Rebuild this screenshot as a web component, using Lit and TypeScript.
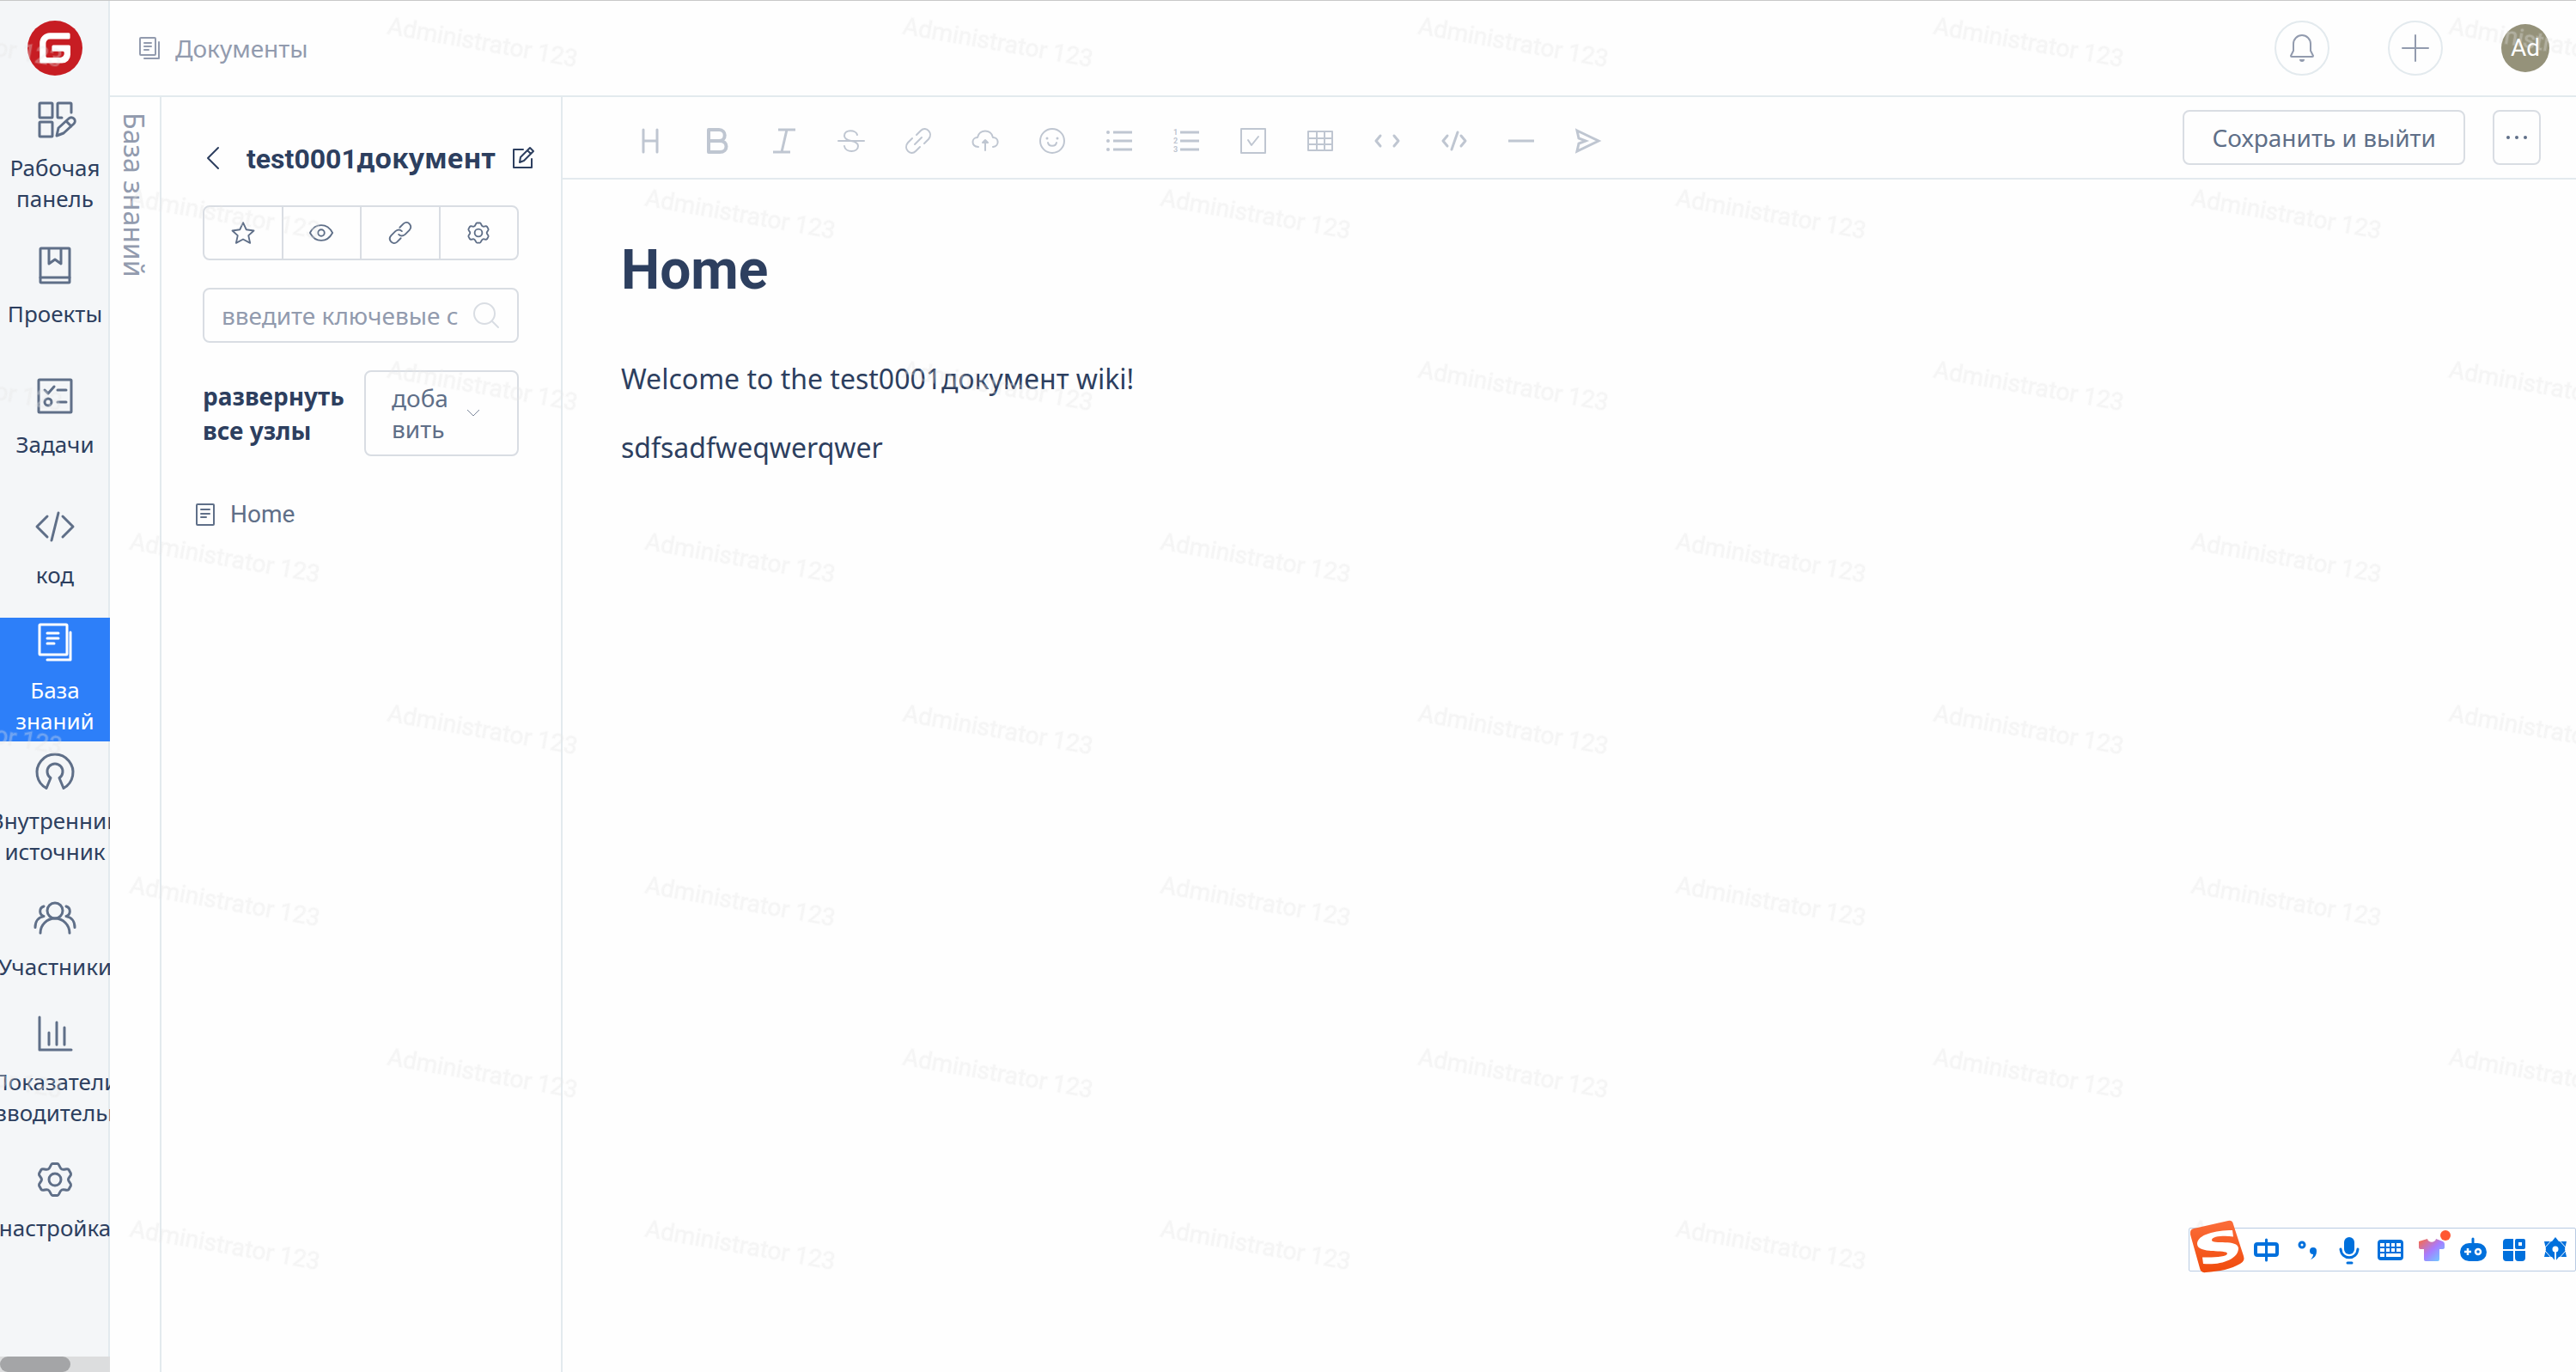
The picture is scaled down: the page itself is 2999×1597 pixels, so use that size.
import { LitElement, html, css, svg } from "lit";
import { customElement } from "lit/decorators.js";

const stroke = (size: number, width: number, body: unknown) => html`
  <svg width=${size} height=${size} viewBox="0 0 ${size} ${size}" fill="none" stroke="currentColor"
    stroke-width=${width} stroke-linecap="round" stroke-linejoin="round" aria-hidden="true">${body}</svg>`;

/* Six-lobed gear outline, centred in a 48 unit box. */
const gear = svg`
  <path d="M21 5.500h6c2 0 2 5 5 6.500s6-2 8 0.500l2.500 4.500c1 2.500-3 4-3 7s4 4.500 3 7l-2.500 4.500c-2 2.500-5-1-8 0.500s-3 6.500-5 6.500h-6c-2 0-2-5-5-6.500s-6 2-8-0.500l-2.500-4.500c-1-2.500 3-4 3-7s-4-4.500-3-7l2.500-4.500c2-2.500 5 1 8-0.500s3-6.500 5-6.500z"/>
  <circle cx="24" cy="24" r="7"/>`;

const navItems = [
  { label: ["Рабочая", "панель"], icon: svg`
    <rect x="6" y="5" width="15" height="17" rx="1"/><rect x="6" y="27" width="15" height="17" rx="1"/>
    <path d="M43 16V6a1 1 0 0 0-1-1H28a1 1 0 0 0-1 1v15a1 1 0 0 0 1 1h4"/>
    <path d="M26 43l2-9 12-11a4 4 0 0 1 6 6L34 40zM37 26l6 6"/>` },
  { label: ["Проекты"], icon: svg`
    <rect x="7" y="4" width="34" height="40" rx="1"/><path d="M7 38h34M17 5v17l7-5 7 5V5"/>` },
  { label: ["Задачи"], icon: svg`
    <rect x="5" y="5" width="38" height="38" rx="1"/><path d="M12 17l4 4 7-8M27 17h10M27 31h10"/><circle cx="16" cy="31" r="4"/>` },
  { label: ["код"], icon: svg`<path d="M15 12L3 24l12 12M33 12l12 12-12 12M28 8l-8 32"/>` },
  { label: ["База", "знаний"], active: true, icon: svg`
    <rect x="6" y="4" width="32" height="35" rx="1"/><path d="M15 14h13M15 20h13M15 26h8M42 13v32H15"/>` },
  { label: ["Внутренний", "источник"], icon: svg`
    <path d="M14 42.500a21 21 0 1 1 20 0l-5-12a9 9 0 1 0-10 0z"/>` },
  { label: ["Участники"], icon: svg`
    <circle cx="24" cy="15" r="9"/><path d="M7 41a17 17 0 0 1 34 0M11 10a6 6 0 0 0 0 11.500c-6 1-10 6-10 13M37 10a6 6 0 0 1 0 11.500c6 1 10 6 10 13"/>` },
  { label: ["Показатели", "производительность"], icon: svg`
    <path d="M6 5v38h37M17 23v14M26 11v26M35 17v20"/>` },
  { label: ["настройка"], icon: gear },
];

const tools = [
  { name: "Заголовок", icon: svg`<path stroke-width="3" d="M7 2v26M23 2v26M7 15h16"/>` },
  { name: "Жирный", icon: svg`<path stroke-width="4" d="M5 2h12c9 0 9 13 0 13H5zM5 15h13c10 0 10 13 0 13H5z"/>` },
  { name: "Курсив", icon: svg`<path stroke-width="3" stroke-linecap="butt" d="M8 2h20M2 28h20M18 2l-6 26"/>` },
  { name: "Зачёркнутый", icon: svg`<path d="M0 15h30M22 8c-1-6-15-7-15 1 0 3 3 5 8 6s8 3 8 6c0 8-15 8-16 0"/>` },
  { name: "Ссылка", icon: svg`<path d="M13 8l5-5c6-6 15 3 9 10l-5 5M8 12l-5 5c-6 7 3 16 9 10l5-5M11 19l8-8"/>` },
  { name: "Загрузить", icon: svg`<path d="M7 22C-2 21-1 11 6 11 8 1 22 1 24 11c7 0 8 10 0 11M15 26V15M12 17l3-3 3 3z"/>` },
  { name: "Эмодзи", icon: svg`<circle cx="15" cy="15" r="14"/><path stroke-width="3" d="M9 12v0.100M21 12v0.100"/><path d="M10 17c1 5 9 5 10 0"/>` },
  { name: "Маркированный список", icon: svg`<path stroke-width="4" d="M2 5v0.100M2 15v0.100M2 25v0.100"/><path stroke-width="3" stroke-linecap="butt" d="M8 5h22M8 15h22M8 25h22"/>` },
  { name: "Нумерованный список", icon: svg`<path stroke-width="3" stroke-linecap="butt" d="M8 5h22M8 15h22M8 25h22"/>
    <g class="digits"><text x="0" y="8">1</text><text x="0" y="18">2</text><text x="0" y="28">3</text></g>` },
  { name: "Список задач", icon: svg`<rect x="1" y="1" width="28" height="28"/><path d="M9 14l4 6 8-10"/>` },
  { name: "Таблица", icon: svg`<path d="M1 4h28v22H1zM1 12h28M1 19h28M11 4v22M20 4v22"/>` },
  { name: "Код", icon: svg`<path stroke-width="3" d="M7 9l-5 6 5 6M23 9l5 6-5 6"/>` },
  { name: "Блок кода", icon: svg`<path stroke-width="3" d="M7 9l-5 6 5 6M23 9l5 6-5 6M19 5l-7 20"/>` },
  { name: "Разделитель", icon: svg`<path stroke-width="3" stroke-linecap="butt" d="M0 15h30"/>` },
  { name: "Отправить", icon: svg`<path stroke-width="3" stroke-linejoin="miter" d="M2 3l25 12L2 27l2-9 8-3-8-3z"/>` },
];

const pageActions = [
  { name: "В избранное", icon: svg`<path d="M24 5l6 13 14 2-10 9 3 14-13-7-13 7 3-14L4 20l14-2z"/>` },
  { name: "Просмотр", icon: svg`<path d="M3 24c10-19 32-19 42 0-10 19-32 19-42 0z"/><circle cx="24" cy="24" r="6"/>` },
  { name: "Ссылка", icon: svg`<path d="M23 14l7-7c8-7 18 4 11 12l-8 8c-5 4-9 3-12 0M25 34l-7 7c-8 7-18-4-11-12l8-8c5-4 9-3 12 0"/>` },
  { name: "Настройки", icon: gear },
];

const imeIcons = [
  svg`<rect x="3" y="9" width="25" height="13" rx="2" fill="none" stroke="#0070dc" stroke-width="4"/><path d="M15.500 4v24" stroke="#0070dc" stroke-width="3" stroke-linecap="round"/>`,
  svg`<circle cx="9" cy="10" r="3" fill="none" stroke="#0070dc" stroke-width="3"/><path d="M22 13a4 4 0 0 1 4 4c0 5-2 8-7 10 2-2 3-4 3-6a4 4 0 0 1 0-8z" fill="#0070dc"/>`,
  svg`<rect x="10" y="1" width="12" height="20" rx="6" fill="#0070dc"/><path d="M6 15c1 13 19 13 20 0M14 31h5" fill="none" stroke="#0070dc" stroke-width="3" stroke-linecap="round"/>`,
  svg`<rect x="1" y="4" width="30" height="24" rx="4" fill="#0070dc"/><path d="M4 8h5v4H4zM11 8h4v4h-4zM17 8h4v4h-4zM23 8h5v4h-5zM4 14h5v4H4zM11 14h4v4h-4zM17 14h4v4h-4zM23 14h5v4h-5zM4 20h5v4H4zM11 20h17v4H11z" fill="#fff"/>`,
  svg`<defs><linearGradient id="shirt" x1="0" y1="0" x2="1" y2="1"><stop offset="0" stop-color="#ff6a3c"/><stop offset="0.500" stop-color="#a77bff"/><stop offset="1" stop-color="#63dcff"/></linearGradient></defs>
    <path d="M11 3c1 5 9 5 10 0l8 3q2 1 2 3v4q0 2-3 2h-3v12q0 2-2 2H9q-2 0-2-2V15H4q-3 0-3-2V6z" fill="url(#shirt)"/><circle cx="32" cy="-1" r="6" fill="#ff5733"/>`,
  svg`<rect x="1" y="8" width="31" height="21" rx="10.500" fill="#0070dc"/><path d="M16 3v7" stroke="#0070dc" stroke-width="3" stroke-linecap="round"/><path d="M6 18h8M10 14v8" stroke="#fff" stroke-width="2.500"/><circle cx="22" cy="18" r="3" fill="none" stroke="#fff" stroke-width="2.500"/>`,
  svg`<path d="M7 3h8v12H3V7q0-4 4-4zM3 17h12v12H7q-4 0-4-4zM17 17h12v8q0 4-4 4h-4q-4 0-4-4z" fill="#0070dc"/><path d="M19 5h8v8h-8z" fill="#fff" stroke="#0070dc" stroke-width="4" stroke-linejoin="round"/>`,
  svg`<path d="M16 1l4 5h9l-2 9 2 9h-9l-4 5-4-5H3l2-9-2-9h9z" fill="#0070dc"/><path d="M4 13L13 3M28 13L19 3M4 17l9 10M28 17l-9 10" stroke="#fff"/><path d="M16 17v13" stroke="#fff" stroke-width="2"/><circle cx="16" cy="15" r="3.500" fill="#fff"/>`,
];

@customElement("app-root")
export class AppRoot extends LitElement {
  static styles = css`
    :host {
      --ink: #2d3f5f;
      --muted: #5f6f88;
      --pale: #929bae;
      --tool: #bfc6d1;
      --line: #e3eaee;
      --edge: #d9dde3;
      display: block;
      color: var(--ink);
      font-family: "Noto Sans", "Open Sans", sans-serif;
      font-size: 26px;
      line-height: 36px;
    }
    * { box-sizing: border-box; }
    svg { display: block; flex: none; overflow: visible; }
    button { font: inherit; color: inherit; background: none; border: 0; padding: 0; cursor: pointer; }
    a { color: inherit; text-decoration: none; }
    h1, h2, p { margin: 0; }

    .page { display: flex; height: 100vh; border-top: 1px solid #c8c8c8; background: #fefefe; overflow: hidden; }

    .nav { width: 128px; flex: none; display: flex; flex-direction: column; background: #f4f6f8; border-right: 2px solid var(--line); }
    .brand { height: 110px; padding: 23px 30px 0 32px; }
    .items { flex: 1; display: flex; flex-direction: column; gap: 8px; margin-right: -2px; overflow: hidden; }
    .item { height: 144px; flex: none; display: flex; flex-direction: column; align-items: center; justify-content: center; gap: 14px; padding-bottom: 2px; text-align: center; white-space: nowrap; }
    .item svg { color: var(--muted); }
    .item.active { background: #2d7ff9; color: #fff; }
    .item.active svg { color: #fff; }
    .word { display: block; }
    .lines { display: flex; flex-direction: column; align-items: center; width: 100%; }
    .track { height: 18px; flex: none; margin-right: -2px; background: #dcddde; }
    .thumb { width: 82px; height: 18px; border-radius: 9px; background: #a4a5a7; }

    .body { flex: 1; min-width: 0; display: flex; flex-direction: column; }
    .top { height: 112px; flex: none; display: flex; align-items: center; justify-content: space-between; padding: 0 31px 0 32px; border-bottom: 2px solid var(--line); }
    .crumb { display: flex; align-items: center; gap: 16px; color: var(--pale); font-size: 28px; }
    .account { display: flex; align-items: center; gap: 68px; color: var(--pale); }
    .round { width: 64px; height: 64px; border: 2px solid var(--line); border-radius: 50%; display: grid; place-items: center; }
    .avatar { width: 56px; height: 56px; border-radius: 50%; background: #95927a; color: #fff; font-family: Roboto, sans-serif; font-size: 28px; }

    .work { flex: 1; min-height: 0; display: flex; }
    .rail { width: 60px; flex: none; border-right: 2px solid var(--line); padding-top: 18px; color: var(--pale); font-size: 32px; line-height: 60px; writing-mode: vertical-rl; }
    .panel { width: 467px; flex: none; border-right: 2px solid var(--line); padding: 48px 49px 0 48px; }
    .title { display: flex; align-items: center; height: 46px; margin-right: -18px; }
    .title h2 { flex: 1; font-size: 32px; line-height: 46px; font-weight: 700; white-space: nowrap; padding-left: 27px; }
    .latin { font-family: Roboto, sans-serif; }
    .group { display: flex; height: 64px; margin-top: 32px; border: 2px solid var(--edge); border-radius: 8px; color: var(--muted); }
    .group button { flex: 1; display: grid; place-items: center; }
    .group button + button { border-left: 2px solid var(--edge); }
    .search { display: flex; align-items: center; height: 64px; margin-top: 32px; padding: 0 20px 0 20px; gap: 12px; border: 2px solid var(--edge); border-radius: 8px; color: var(--edge); }
    .search input { flex: 1; min-width: 0; border: 0; padding: 0; outline: 0; background: none; font: inherit; font-size: 28px; color: var(--ink); }
    .search input::placeholder { color: var(--pale); opacity: 1; }
    .row { display: flex; margin-top: 32px; justify-content: space-between; }
    .expand { width: 180px; padding-top: 10px; font-size: 28px; line-height: 40px; font-weight: 700; text-align: left; align-self: flex-start; }
    .add { width: 180px; height: 100px; display: flex; align-items: center; gap: 20px; padding: 0 30px; border: 2px solid var(--edge); border-radius: 8px; color: var(--muted); font-size: 28px; text-align: left; }
    .add .lines { width: 68px; align-items: flex-start; }
    .node { display: flex; align-items: center; gap: 16px; margin: 50px 0 0 -10px; color: var(--muted); font-family: Roboto, sans-serif; font-size: 28px; }

    .main { flex: 1; min-width: 0; display: flex; flex-direction: column; }
    .bar { height: 96px; flex: none; display: flex; align-items: center; justify-content: space-between; padding: 0 41px 0 63px; border-bottom: 2px solid var(--line); }
    .tools { display: flex; padding-top: 8px; color: var(--tool); }
    .tools button { width: 78px; height: 64px; display: grid; place-items: center; }
    .digits { fill: currentColor; stroke: none; font: 700 9px Roboto, sans-serif; }
    .actions { display: flex; gap: 32px; color: var(--muted); }
    .boxed { height: 64px; border: 2px solid var(--edge); border-radius: 8px; }
    .save { padding: 0 32px; font-size: 28px; }
    .more { width: 56px; display: grid; place-items: center; }
    .doc { padding: 64px 68px; font-size: 32px; line-height: 48px; }
    .doc h1 { font: 700 64px/84px Roboto, sans-serif; margin-bottom: 60px; }
    .doc p { margin-bottom: 32px; }

    .marks { position: fixed; inset: 0; width: 100%; height: 100%; pointer-events: none; }
    .mark { font: 28px Roboto, sans-serif; fill: #e6e6e6; fill-opacity: 0.280; stroke: #e6e6e6; stroke-opacity: 0.120; stroke-width: 2; }

    .ime { position: fixed; right: 0; bottom: 117px; height: 51px; display: flex; align-items: center; gap: 16px; padding: 0 7px 0 74px; background: #fff; border: 1px solid #b9cbe2; border-radius: 2px; }
    .sogou { position: absolute; left: 0; top: -10px; }
  `;

  render() {
    return html`
      <div class="page">
        <nav class="nav">
          <a class="brand" href="#" aria-label="Gitee">
            <svg width="64" height="64" viewBox="0 0 64 64"><circle cx="32" cy="32" r="32" fill="#c71d23"/>
              <path fill="#fff" d="M48 14.200H26A12 12 0 0 0 14.200 26v22a1.600 1.600 0 0 0 1.600 1.600H40A10 10 0 0 0 50 39.500V30.200a1.600 1.600 0 0 0-1.600-1.600H30a1.600 1.600 0 0 0-1.600 1.600v4a1.600 1.600 0 0 0 1.600 1.600h11.200a1.600 1.600 0 0 1 1.600 1.600v0.800a4.700 4.700 0 0 1-4.700 4.700H23a1.600 1.600 0 0 1-1.600-1.600V26.200a4.700 4.700 0 0 1 4.700-4.700H48a1.600 1.600 0 0 0 1.600-1.600v-4a1.600 1.600 0 0 0-1.600-1.700z"/></svg>
          </a>
          <div class="items">
            ${navItems.map((item) => html`
              <a class="item ${item.active ? "active" : ""}" href="#">
                ${stroke(48, 3, item.icon)}
                <span class="lines">${item.label.map((word) => html`<span class="word">${word}</span>`)}</span>
              </a>`)}
          </div>
          <div class="track"><div class="thumb"></div></div>
        </nav>

        <div class="body">
          <header class="top">
            <a class="crumb" href="#">
              ${stroke(28, 2, svg`<rect x="3" y="2" width="18" height="20" rx="1"/><path d="M8 8h8M8 12h8M8 16h5M25 7v19H8"/>`)}
              Документы
            </a>
            <div class="account">
              <button class="round" aria-label="Уведомления">
                ${stroke(32, 2, svg`<path d="M3 25l3-6v-8a10 10 0 0 1 20 0v8l3 6q0 1-1 1H4q-1 0-1-1z"/><path d="M13 29h6a3 3 0 0 1-6 0z" fill="currentColor" stroke="none"/>`)}
              </button>
              <button class="round" aria-label="Создать">${stroke(32, 2, svg`<path d="M1 16h30M16 1v30"/>`)}</button>
              <button class="avatar">Ad</button>
            </div>
          </header>

          <div class="work">
            <div class="rail">База знаний</div>
            <aside class="panel">
              <div class="title">
                <button aria-label="Назад">${stroke(24, 2, svg`<path d="M18 0L6 12l12 12"/>`)}</button>
                <h2><span class="latin">test0001</span>документ</h2>
                <button aria-label="Переименовать">${stroke(26, 2, svg`<path d="M13 3H2v21h21V14M9 18l1-6L21 1l4 4-11 11zM18 4l4 4"/>`)}</button>
              </div>
              <div class="group">
                ${pageActions.map((action) => html`
                  <button aria-label=${action.name}>
                    <svg width="30" height="30" viewBox="0 0 48 48" fill="none" stroke="currentColor" stroke-width="3" stroke-linecap="round" stroke-linejoin="round">${action.icon}</svg>
                  </button>`)}
              </div>
              <label class="search">
                <input type="text" aria-label="Поиск" placeholder="введите ключевые с" />
                ${stroke(32, 2, svg`<circle cx="14" cy="14" r="12"/><path d="M23 23l7 7"/>`)}
              </label>
              <div class="row">
                <button class="expand">развернуть<br />все узлы</button>
                <button class="add"><span class="lines"><span>доба</span><span>вить</span></span>
                  <svg width="14" height="8" viewBox="0 0 14 8" fill="none" stroke="#7d889c" stroke-width="1"><path d="M0 0l7 7 7-7"/></svg>
                </button>
              </div>
              <a class="node" href="#">
                ${stroke(26, 2, svg`<rect x="3" y="1" width="20" height="24" rx="1"/><path d="M8 7h10M8 12h10M8 16h6"/>`)}
                Home
              </a>
            </aside>

            <main class="main">
              <div class="bar">
                <div class="tools">
                  ${tools.map((tool) => html`<button aria-label=${tool.name}>${stroke(30, 2, tool.icon)}</button>`)}
                </div>
                <div class="actions">
                  <button class="boxed save">Сохранить и выйти</button>
                  <button class="boxed more" aria-label="Ещё">
                    <svg width="26" height="6" fill="currentColor"><circle cx="3" cy="3" r="2"/><circle cx="13" cy="3" r="2"/><circle cx="23" cy="3" r="2"/></svg>
                  </button>
                </div>
              </div>
              <article class="doc">
                <h1>Home</h1>
                <p>Welcome to the test0001документ wiki!</p>
                <p>sdfsadfweqwerqwer</p>
              </article>
            </main>
          </div>
        </div>
      </div>

      <svg class="marks" aria-hidden="true">
        <defs>
          <pattern id="mark" width="600" height="400" patternUnits="userSpaceOnUse" x="400" y="0">
            <text class="mark" transform="translate(50 39) rotate(10)">Administrator 123</text>
            <text class="mark" transform="translate(350 239) rotate(10)">Administrator 123</text>
          </pattern>
        </defs>
        <rect width="100%" height="100%" fill="url(#mark)"/>
      </svg>

      <div class="ime">
        <svg class="sogou" width="64" height="62" viewBox="0 0 64 62">
          <defs><linearGradient id="orange" x1="0" y1="0" x2="0" y2="1"><stop offset="0" stop-color="#fb6d3a"/><stop offset="1" stop-color="#f04a0c"/></linearGradient></defs>
          <path d="M5 10L45 1q5-1 6 4l12 37q2 6-4 9c-10 6-24 9-40 10q-6 1-7-5L1 17q-1-6 4-7z" fill="url(#orange)"/>
          <path d="M50 12C30 12 9 17 9 28c0 12 35 6 35 11 0 4-16 5-29 4.500l1 7.500c20 2 41-5 41-18 0-11-31-4-31-9.500 0-4.500 14-5.500 25-4z" fill="#fff"/>
        </svg>
        ${imeIcons.map((icon) => html`<svg width="32" height="32" viewBox="0 0 32 32">${icon}</svg>`)}
      </div>
    `;
  }
}
